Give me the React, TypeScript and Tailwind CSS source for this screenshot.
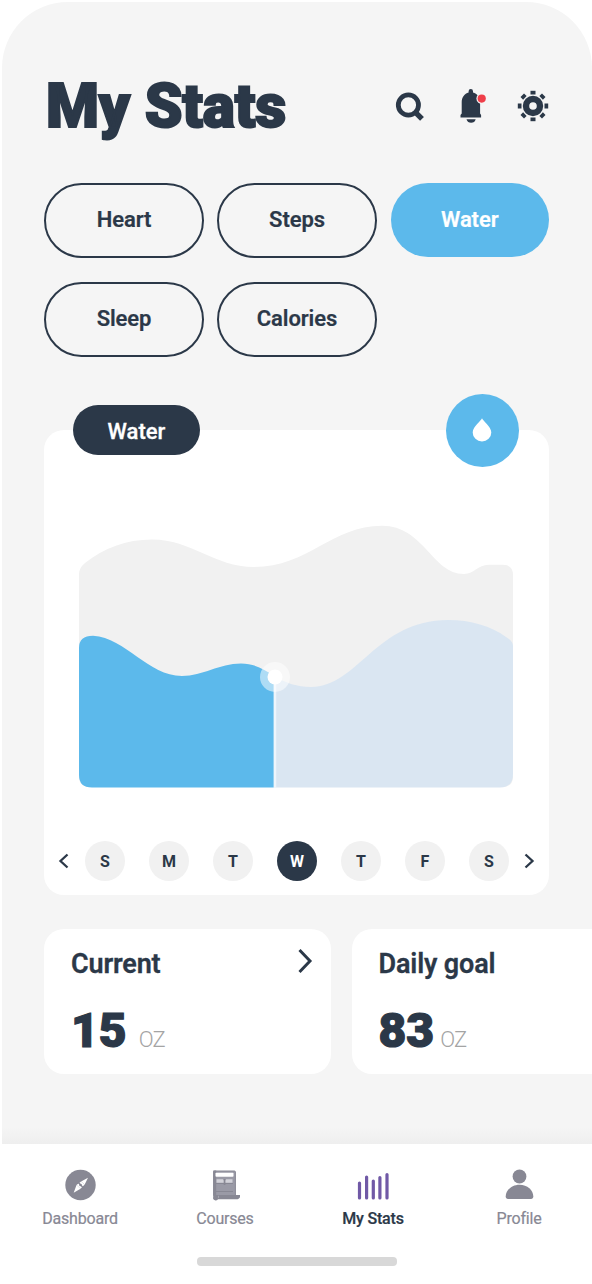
import React from "react";

type Metric = { name: string; active?: boolean };

const metrics: Metric[] = [
  { name: "Heart" },
  { name: "Steps" },
  { name: "Water", active: true },
  { name: "Sleep" },
  { name: "Calories" },
];

const days = ["S", "M", "T", "W", "T", "F", "S"];
const selectedDay = 3;

function SearchIcon() {
  return (
    <svg width="30" height="34" viewBox="395 89 30 34" fill="none" stroke="#2b3848">
      <circle cx="408.4" cy="105" r="10.1" strokeWidth="4.8" />
      <path d="M415.5 112.3 422 118.8" strokeWidth="5.4" />
    </svg>
  );
}

function BellIcon() {
  return (
    <svg width="30" height="34" viewBox="458 89 30 34" fill="#2b3848">
      <path d="M460.5 117.4V115l1.2-1.5v-11.2c0-5 2.9-8.6 6.9-9.7V91.3a2.2 2.2 0 0 1 4.400 0v1.300c4.200 1.100 7.100 4.700 7.100 9.700v11.200l1 1.500v2.400z" />
      <path d="M466.5 119.200h9.200c-.6 2.300-2.300 3.600-4.600 3.600s-4-1.300-4.600-3.600z" />
      <circle cx="481.700" cy="98.600" r="5.300" fill="#f5f5f5" />
      <circle cx="481.700" cy="98.600" r="4.100" fill="#ef3e49" />
    </svg>
  );
}

function GearIcon() {
  return (
    <svg width="32" height="32" viewBox="-16 -16 32 32">
      <circle r="7" fill="none" stroke="#2b3848" strokeWidth="6.400" />
      {[0, 45, 90, 135, 180, 225, 270, 315].map((a) => (
        <rect key={a} x="-2.500" y="-15.200" width="5" height="3.700" fill="#2b3848" transform={`rotate(${a})`} />
      ))}
    </svg>
  );
}

function Chevron({ left = false, big = false }: { left?: boolean; big?: boolean }) {
  return big ? (
    <svg width="16" height="26" viewBox="0 0 16 26" fill="none" stroke="#2b3848" strokeWidth="3">
      <path d="M2.500 2 13 13 2.500 24" />
    </svg>
  ) : (
    <svg width="12" height="16" viewBox="0 0 12 16" fill="none" stroke="#2b3848" strokeWidth="2.300">
      <path d={left ? "M9.500 1.500 2.500 8 9.500 14.500" : "M2.500 1.500 9.500 8 2.500 14.500"} />
    </svg>
  );
}

function WaterChart() {
  return (
    <svg className="block" width="436" height="266" viewBox="78 523 436 266">
      <path
        fill="#f1f1f1"
        d="M79 777V574Q79 568 85 563C104 548 126 539.500 152 539.500C192 539.500 214 567 254 567C308 567 332 525.800 382 525.800C424 525.800 432 574 464 574C475 574 477 564.800 489 564.800H503Q513 564.800 513 575V777Q513 787 502 787H90Q79 787 79 777Z"
      />
      <path
        fill="#dae6f2"
        d="M274 787V676C286 683 297 687 311 687C358 687 376 620 448 620C471 620 491 626 506 637Q513 641 513 646V774Q513 787.500 500 787.500H274Z"
      />
      <path
        fill="#5cb9eb"
        d="M79 648Q79 635.800 93 635.800C126 638 148 676 182 676C203 676 219 663.500 241 663.500C254 663.500 264 669 274 676V787.500H92Q79 787.500 79 775Z"
      />
      <path d="M274.900 677V788" stroke="#eef5fb" strokeWidth="2.600" />
      <circle cx="275" cy="677" r="15" fill="#fff" fillOpacity=".5" />
      <circle cx="275" cy="677" r="7.500" fill="#fff" />
    </svg>
  );
}

function CompassIcon() {
  return (
    <svg width="32" height="32" viewBox="-16.500 -16 32 32">
      <circle r="15.200" fill="#888894" />
      <path d="M7.500-7.300 4.200-.4.600-3.600ZM-6.800 7.700-4-.1 0 3.800Z" fill="#fff" />
      <path d="M4.200-.4.600-3.600-4-.1 0 3.800Z" fill="#fff" />
      <path d="M-2.800-3.200 3.200 3.200" stroke="#888894" strokeWidth="1.400" />
      <circle r="1.300" fill="#888894" />
    </svg>
  );
}

function CoursesIcon() {
  return (
    <svg width="30" height="32" viewBox="210 1169 30 32">
      <rect x="213.700" y="1171" width="21.700" height="25" rx="1" fill="#9a9aa6" stroke="#888894" />
      <path d="M213.200 1170.500V1197a2.500 2.500 0 0 0 5 1.500V1195h-2v-24.500z" fill="#888894" />
      <rect x="215.500" y="1172.800" width="18" height="3.900" rx=".8" fill="#fff" />
      <path d="M216.500 1179.300h6.500l1.500 2 1.500-2h6.500v3.500h-16z" fill="#d2d2d9" />
      <path d="M223.700 1179h1.700v6h-1.700zM216 1183h17v1h-17zM216 1191h17v1h-17z" fill="#888894" />
      <path d="M219 1195h21.500c0 2.500-1.500 4.300-4 4.300h-21c2 0 3-1 3.500-4.300z" fill="#888894" />
    </svg>
  );
}

function StatsIcon() {
  return (
    <svg width="34" height="32" viewBox="356 1169 34 32" stroke="#7059a6" strokeWidth="3.200" strokeLinecap="round">
      <path d="M359.500 1183v15M366.600 1177v21M373.300 1181v17M379.900 1177.500v20.500M387 1174.500v23.500" />
    </svg>
  );
}

function ProfileIcon() {
  return (
    <svg width="32" height="32" viewBox="503 1169 32 32" fill="#888894">
      <circle cx="519.500" cy="1176.500" r="6.900" />
      <path d="M505.700 1196.500c0-6.300 6-11.800 13.800-11.800s13.800 5.500 13.800 11.800c0 1.500-.9 2.500-2.300 2.500h-23c-1.400 0-2.300-1-2.300-2.500z" />
    </svg>
  );
}

function NavItem({ label, icon, className = "" }: { label: string; icon: React.ReactNode; className?: string }) {
  return (
    <button className={`flex w-[100px] shrink-0 flex-col items-center ${className}`}>
      {icon}
      <span className="mt-[8px] text-[16px] leading-[19px] tracking-[-0.2px] whitespace-nowrap [-webkit-text-stroke:0.200px_currentColor]">
        {label}
      </span>
    </button>
  );
}

function ValueCard({
  title,
  value,
  chevron,
  className,
  unitClass,
}: {
  title: string;
  value: string;
  chevron?: boolean;
  className: string;
  unitClass: string;
}) {
  return (
    <section className={`h-[145px] shrink-0 bg-white pt-[16px] ${className}`}>
      <div className="flex h-[38px] items-center justify-between pr-[18px]">
        <h2 className="text-[27px] leading-[38px] font-semibold tracking-[-0.15px] [-webkit-text-stroke:0.300px_#2b3848]">{title}</h2>
        {chevron && (
          <span className="-mt-[7px]">
            <Chevron big />
          </span>
        )}
      </div>
      <div className="mt-[18px] flex items-baseline leading-[60px]">
        <span className="text-[48px] font-black [-webkit-text-stroke:1.200px_#2b3848]">{value}</span>
        <span className={`text-[22px] font-light tracking-[-0.7px] text-[#a4a4a4] ${unitClass}`}>OZ</span>
      </div>
    </section>
  );
}

export default function App() {
  return (
    <div className="h-[1284px] w-[592px] overflow-hidden bg-white pt-[2px] font-[Roboto,sans-serif] text-[#2b3848]">
      <main className="ml-[1.500px] h-[1142px] overflow-hidden rounded-t-[66px] bg-[#f5f5f5] pt-[68px] pl-[42.500px]">
        <header className="flex h-[72px] w-[505px] items-center justify-between">
          <h1 className="pt-[2px] pl-[2px] text-[60.500px] leading-[72px] font-black tracking-[-0.250px] whitespace-nowrap [-webkit-text-stroke:2px_#2b3848]">
            My Stats
          </h1>
          <div className="flex items-center">
            <SearchIcon />
            <span className="ml-[33px]">
              <BellIcon />
            </span>
            <span className="ml-[29px]">
              <GearIcon />
            </span>
          </div>
        </header>

        <div className="mt-[41px] grid w-[506px] grid-cols-[160px_160px_159px] gap-x-[13px] gap-y-[24px]">
          {metrics.map((m) => (
            <button
              key={m.name}
              className={`flex items-center justify-center rounded-full text-[22px] font-semibold tracking-[-0.100px] [-webkit-text-stroke:0.200px_currentColor] ${
                m.active ? "ml-[0.500px] h-[74px] bg-[#5cb9eb] pb-[1px] text-white" : "h-[75px] border-2 border-[#2b3848] pb-[3px]"
              }`}
            >
              {m.name}
            </button>
          ))}
        </div>

        <section className="relative mt-[73px] h-[465px] w-[505px] rounded-[20px] bg-white pt-[93px]">
          <div className="absolute -top-[25px] left-[29px] flex h-[50px] w-[127px] items-center justify-center rounded-full bg-[#2b3848] pt-[2px] text-[22px] font-medium text-white [-webkit-text-stroke:0.300px_#ffffff]">
            Water
          </div>
          <div className="absolute -top-[36.500px] left-[401.500px] flex size-[73px] items-center justify-center rounded-full bg-[#5cb9eb]">
            <svg width="20" height="24" viewBox="0 0 20 24" fill="#fff">
              <path d="M10 .3C10.500 2.500 19.300 8.500 19.300 14.500a9.300 9 0 0 1-18.600 0C.7 8.500 9.500 2.500 10 .3Z" />
            </svg>
          </div>
          <div className="pl-[34px]">
            <WaterChart />
          </div>
          <div className="mt-[52px] flex items-center pl-[14px]">
            <Chevron left />
            <div className="ml-[15px] flex gap-[24px]">
              {days.map((d, i) => (
                <span
                  key={i}
                  className={`flex size-[40px] items-center justify-center rounded-full pt-[2px] text-[16px] font-bold ${
                    i === selectedDay ? "bg-[#2b3848] text-white" : "bg-[#f1f1f1]"
                  }`}
                >
                  {d}
                </span>
              ))}
            </div>
            <span className="ml-[14px]">
              <Chevron />
            </span>
          </div>
        </section>

        <div className="mt-[34px] flex gap-[21px]">
          <ValueCard title="Current" value="15" chevron className="w-[287px] rounded-[20px] pl-[27px]" unitClass="ml-[12px]" />
          <ValueCard title="Daily goal" value="83" className="w-[260px] rounded-l-[20px] pl-[26.500px]" unitClass="ml-[6px]" />
        </div>
        <div className="mt-[53px] -ml-[43px] h-[18px] bg-linear-to-b from-[#f5f5f5] to-[#eeeeee]" />
      </main>

      <nav className="bg-white pt-[25px] text-[#888894]">
        <div className="flex pl-[30px]">
          <NavItem label="Dashboard" icon={<CompassIcon />} />
          <NavItem label="Courses" icon={<CoursesIcon />} className="ml-[45px]" />
          <NavItem label="My Stats" icon={<StatsIcon />} className="ml-[48px] font-medium !text-[#2b3848]" />
          <NavItem label="Profile" icon={<ProfileIcon />} className="ml-[46px]" />
        </div>
        <div className="mt-[29px] ml-[197px] h-[9px] w-[200px] rounded-[4px] bg-[#d8d8d8]" />
      </nav>
    </div>
  );
}
